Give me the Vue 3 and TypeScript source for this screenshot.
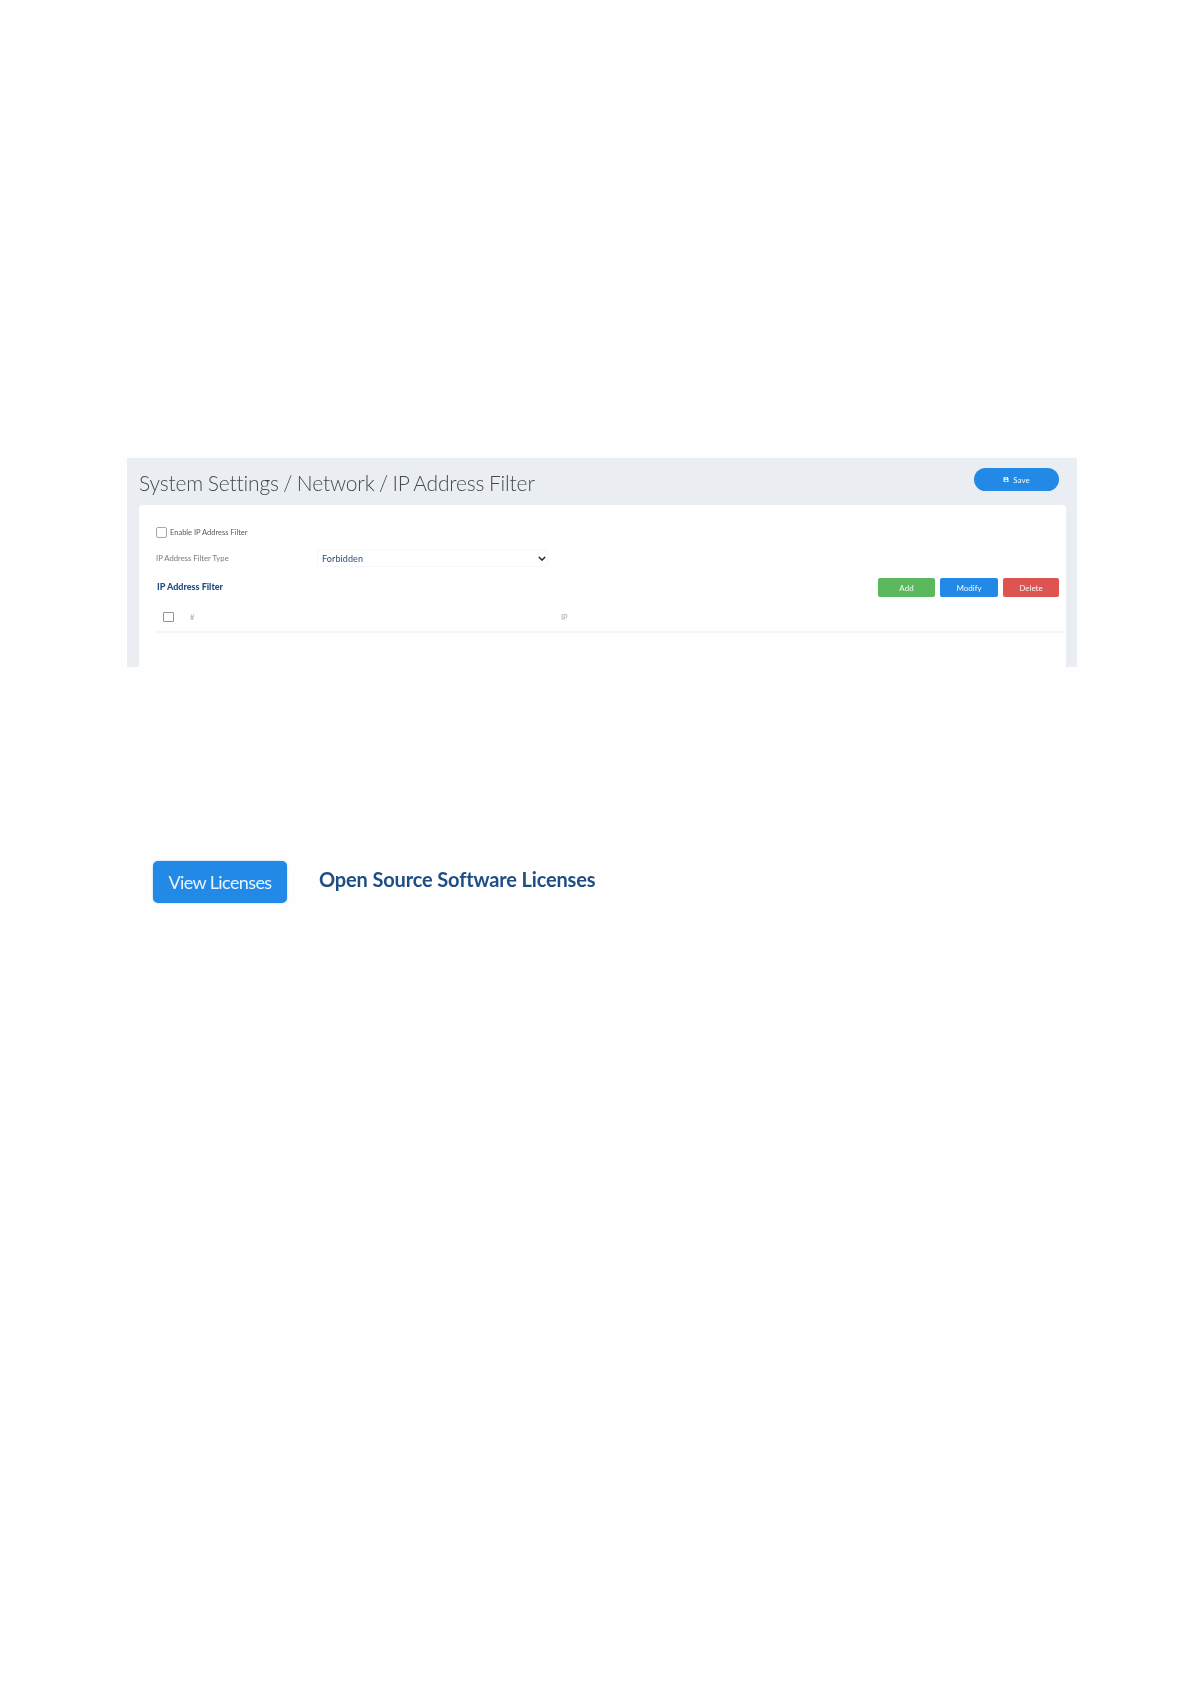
<script setup lang="ts">
const columns: string[] = ['#', 'IP']
</script>

<template>
  <main class="page">
    <section class="panel">
      <header class="head">
        <h1 class="title">System Settings / Network / IP Address Filter</h1>
        <button class="save" type="button">
          <svg class="save-icon" viewBox="0 0 10 10" aria-hidden="true">
            <path d="M1 1h6.500L9 2.500V9H1z" fill="#fff" />
            <rect x="3" y="1.800" width="3.500" height="1.800" fill="#228ae6" />
            <rect x="2.600" y="5.400" width="4.800" height="2.800" fill="#228ae6" />
          </svg>
          Save
        </button>
      </header>
      <div class="card">
        <label class="enable"><span class="box"></span>Enable IP Address Filter</label>
        <div class="type-row">
          <span class="type-label">IP Address Filter Type</span>
          <div class="select">
            <span>Forbidden</span>
            <svg class="chevron" viewBox="0 0 10 6" aria-hidden="true">
              <path d="M1 1l4 4 4-4" fill="none" stroke="#1c2b3a" stroke-width="1.800" />
            </svg>
          </div>
        </div>
        <div class="toolbar">
          <h2 class="sub">IP Address Filter</h2>
          <div class="actions">
            <button class="act add" type="button">Add</button>
            <button class="act modify" type="button">Modify</button>
            <button class="act delete" type="button">Delete</button>
          </div>
        </div>
        <div class="table-head">
          <span class="box box-table"></span>
          <span class="col col-index">{{ columns[0] }}</span>
          <span class="col">{{ columns[1] }}</span>
        </div>
      </div>
    </section>
    <section class="licenses">
      <button class="view" type="button">View Licenses</button>
      <h2 class="lic-title">Open Source Software Licenses</h2>
    </section>
  </main>
</template>

<style scoped>
.page {
  min-height: 1684px;
  box-sizing: border-box;
  padding: 458px 113px 0 127px;
  background: #fefefe;
  font-family: Lato, "Open Sans", sans-serif;
}
.panel {
  height: 209px;
  overflow: hidden;
  background: #eaeef3;
  padding: 0 11px 0 12px;
  filter: blur(0.4px);
}
.head {
  height: 47px;
  display: flex;
  justify-content: space-between;
  align-items: flex-start;
  padding-right: 7px;
}
.title {
  margin: 12px 0 0;
  font-size: 21px;
  line-height: 26px;
  font-weight: 300;
  letter-spacing: -0.15px;
  word-spacing: -1px;
  color: #454a50;
  white-space: nowrap;
}
.save {
  margin-top: 10px;
  width: 85px;
  height: 23px;
  border: 0;
  border-radius: 12px;
  background: #228ae6;
  color: #f2f8fe;
  font: 400 8px Lato, sans-serif;
  display: flex;
  align-items: center;
  justify-content: center;
  gap: 4px;
  padding: 0;
}
.save-icon {
  width: 6px;
  height: 7px;
}
.card {
  height: 170px;
  background: #fff;
  border-radius: 4px 4px 0 0;
  padding: 22px 3px 0 17px;
}
.enable {
  display: flex;
  align-items: center;
  gap: 3px;
  height: 10px;
  font-size: 7.500px;
  color: #55595e;
}
.box {
  display: block;
  box-sizing: border-box;
  width: 11px;
  height: 11px;
  border: 1px solid #a5a8ac;
  border-radius: 2px;
  flex: none;
}
.type-row {
  display: flex;
  align-items: center;
  margin-top: 12px;
  height: 18px;
}
.type-label {
  width: 161px;
  font-size: 7.700px;
  color: #777b80;
}
.select {
  box-sizing: border-box;
  width: 231px;
  height: 18px;
  padding: 0 0 0 4px;
  display: flex;
  align-items: center;
  justify-content: space-between;
  font-size: 9px;
  letter-spacing: 0.1px;
  color: #2c5078;
  border: 1px solid #f6f7f8;
  border-radius: 3px;
}
.chevron {
  width: 8px;
  height: 5px;
  margin-right: 1px;
}
.toolbar {
  display: flex;
  justify-content: space-between;
  align-items: flex-start;
  margin-top: 11px;
  height: 19px;
  padding-right: 4px;
}
.sub {
  margin: 1px 0 0 1px;
  font-size: 9px;
  line-height: 15px;
  font-weight: 900;
  color: #1f4e85;
}
.actions {
  display: flex;
  gap: 5px;
}
.act {
  width: 57px;
  height: 19px;
  padding: 0;
  border: 0;
  border-radius: 2px;
  color: #f5f9f6;
  font: 400 8px Lato, sans-serif;
}
.modify {
  width: 58px;
}
.delete {
  width: 56px;
}
.add {
  background: #5cb85c;
}
.modify {
  background: #228ae6;
}
.delete {
  background: #dd5451;
}
.table-head {
  display: flex;
  align-items: center;
  height: 30px;
  margin: 6px 0 0;
  padding-left: 7px;
  border-bottom: 2px solid #f4f5f6;
  box-sizing: border-box;
}
.box-table {
  height: 10px;
  border-color: #8f9296;
  border-radius: 1px;
}
.col {
  font-size: 7.500px;
  color: #a3a6aa;
}
.col-index {
  margin-left: 16px;
  width: 371px;
}
.licenses {
  display: flex;
  align-items: flex-start;
  margin: 194px 0 0 26px;
  filter: blur(0.4px);
}
.view {
  width: 134px;
  height: 42px;
  padding: 0;
  border: 0;
  border-radius: 5px;
  background: #228ae6;
  color: #e9f3fc;
  font: 400 18px Lato, sans-serif;
  letter-spacing: -0.6px;
  box-shadow: 0 0 2px rgba(34, 138, 230, 0.5);
}
.lic-title {
  margin: 5px 0 0 32px;
  font-size: 20px;
  line-height: 26px;
  font-weight: 700;
  letter-spacing: -0.15px;
  color: #1f4e85;
  white-space: nowrap;
}
</style>
